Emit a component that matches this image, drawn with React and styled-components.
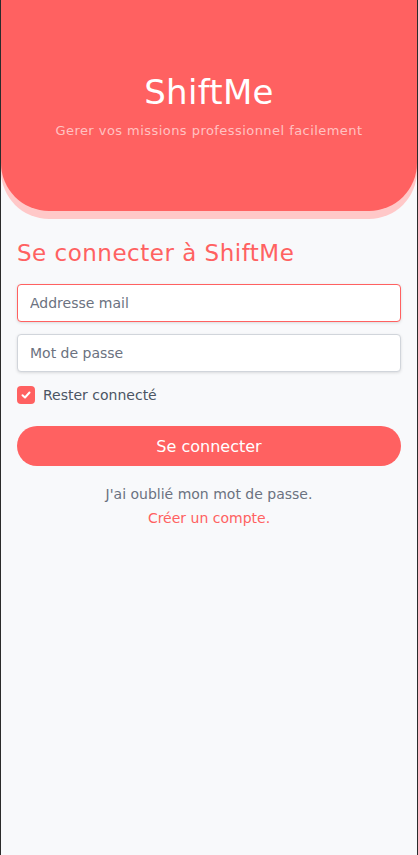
import React from "react";
import styled, { createGlobalStyle } from "styled-components";

const Global = createGlobalStyle`
  html, body { margin: 0; padding: 0; }
  body {
    background: #f8f9fb;
    font-family: "DejaVu Sans", "Open Sans", sans-serif;
  }
  * { box-sizing: border-box; }
`;

const Frame = styled.div`
  min-height: 855px;
  border-left: 1px solid #2b2b2b;
  border-right: 1px solid #2b2b2b;
  background: #f8f9fb;
  display: flex;
  flex-direction: column;
`;

const Header = styled.header`
  height: 211px;
  background: #ff6161;
  border-radius: 0 0 48px 48px;
  box-shadow: 0 8px 0 #ffc8c8;
  display: flex;
  flex-direction: column;
  align-items: center;
  justify-content: center;
  padding-bottom: 2px;
  color: #fff;
`;

const Title = styled.h1`
  margin: 0;
  font-size: 34px;
  font-weight: 400;
  line-height: 44px;
  letter-spacing: 0.3px;
`;

const Subtitle = styled.p`
  margin: 8px 0 0;
  font-size: 13px;
  line-height: 18px;
  letter-spacing: 0.45px;
  color: #ffc2c2;
`;

const Main = styled.main`
  padding: 27px 16px 0;
  display: flex;
  flex-direction: column;
`;

const Heading = styled.h2`
  margin: 0 0 16px;
  font-size: 23px;
  font-weight: 400;
  line-height: 30px;
  letter-spacing: 0.5px;
  color: #ff6161;
`;

const Input = styled.input`
  width: 100%;
  height: 38px;
  padding: 0 12px;
  border: 1px solid ${(p) => (p.$focused ? "#ff6161" : "#d1d5db")};
  border-radius: 4px;
  background: #fff;
  box-shadow: 0 1px 3px rgba(0, 0, 0, 0.12);
  font-family: inherit;
  font-size: 14px;
  color: #374151;
  outline: none;
  margin-bottom: ${(p) => p.$mb}px;
  &::placeholder { color: #6b7280; }
`;

const CheckRow = styled.label`
  display: flex;
  align-items: center;
  gap: 8px;
  font-size: 14px;
  color: #4b5563;
  margin-bottom: 22px;
`;

const Box = styled.span`
  width: 18px;
  height: 18px;
  border-radius: 4px;
  background: #ff6161;
  display: inline-flex;
  align-items: center;
  justify-content: center;
`;

const Button = styled.button`
  width: 100%;
  height: 40px;
  border: none;
  border-radius: 20px;
  background: #ff6161;
  color: #fff;
  font-family: inherit;
  font-size: 16px;
  font-weight: 400;
  cursor: pointer;
  margin-bottom: 18px;
`;

const Links = styled.div`
  display: flex;
  flex-direction: column;
  align-items: center;
  gap: 4px;
  font-size: 14px;
  line-height: 20px;
`;

const LinkText = styled.a`
  color: ${(p) => (p.$accent ? "#ff6161" : "#6b7280")};
  text-decoration: none;
`;

export default function App() {
  return (
    <>
      <Global />
      <Frame>
        <Header>
          <Title>ShiftMe</Title>
          <Subtitle>Gerer vos missions professionnel facilement</Subtitle>
        </Header>
        <Main>
          <Heading>Se connecter à ShiftMe</Heading>
          <Input $focused $mb={12} type="email" placeholder="Addresse mail" autoFocus />
          <Input $mb={14} type="password" placeholder="Mot de passe" />
          <CheckRow>
            <Box>
              <svg width="12" height="12" viewBox="0 0 12 12">
                <path d="M2.5 6.2 L5 8.5 L9.5 3.5" fill="none" stroke="#fff" strokeWidth="2" strokeLinecap="round" strokeLinejoin="round" />
              </svg>
            </Box>
            Rester connecté
          </CheckRow>
          <Button>Se connecter</Button>
          <Links>
            <LinkText href="#">J'ai oublié mon mot de passe.</LinkText>
            <LinkText href="#" $accent>Créer un compte.</LinkText>
          </Links>
        </Main>
      </Frame>
    </>
  );
}
